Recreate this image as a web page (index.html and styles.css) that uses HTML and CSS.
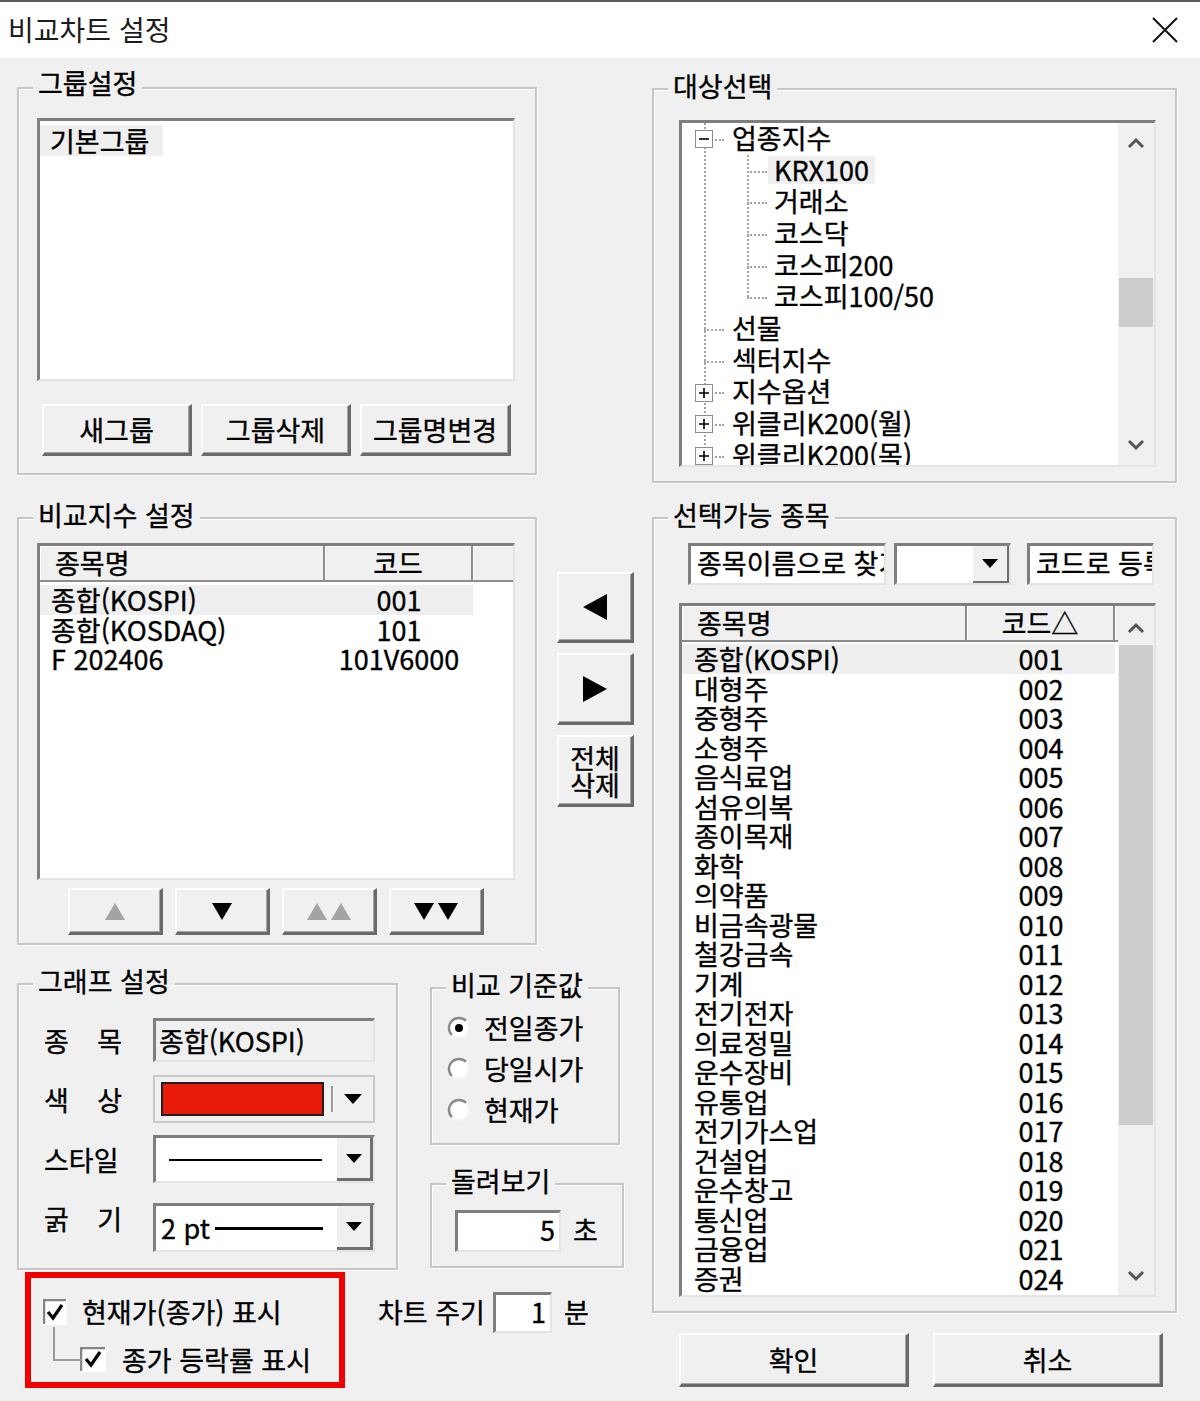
FILE: index.html
```html
<!DOCTYPE html>
<html lang="ko">
<head>
<meta charset="utf-8">
<title>비교차트 설정</title>
<link rel="stylesheet" href="styles.css">
</head>
<body>
<div class="dialog">
  <header class="titlebar">
    <span class="title">비교차트 설정</span>
    <svg class="close" viewBox="0 0 26 26"><path d="M1 1L25 25M25 1L1 25" stroke="#111" stroke-width="2" fill="none"/></svg>
  </header>
  <main class="content">
    <section class="leftcol">
      <div class="group g-groupset">
        <span class="legend legend-hi">그룹설정</span>
        <div class="listbox sunken">
          <div class="lb-item">기본그룹</div>
        </div>
        <div class="btnrow btnrow-group">
          <button class="btn bg-btn">새그룹</button>
          <button class="btn bg-btn">그룹삭제</button>
          <button class="btn bg-btn bg-wide">그룹명변경</button>
        </div>
      </div>

      <div class="row2">
        <div class="group g-compare">
          <span class="legend">비교지수 설정</span>
          <div class="listview lv-compare sunken">
            <div class="lv-main">
              <div class="lv-head">
                <div class="hcell hc-name">종목명</div>
                <div class="hcell hc-code">코드</div>
                <div class="hcell hc-rest"></div>
              </div>
              <div class="lv-rows">
                <div class="lv-row sel"><span class="c-name">종합(KOSPI)</span><span class="c-code">001</span></div>
                <div class="lv-row"><span class="c-name">종합(KOSDAQ)</span><span class="c-code">101</span></div>
                <div class="lv-row"><span class="c-name">F 202406</span><span class="c-code">101V6000</span></div>
              </div>
            </div>
          </div>
          <div class="btnrow btnrow-order">
            <button class="btn ob"><svg width="20" height="17" viewBox="0 0 20 17"><polygon points="10,0 20,17 0,17" fill="#a3a3a3"/></svg></button>
            <button class="btn ob"><svg width="20" height="17" viewBox="0 0 20 17"><polygon points="0,0 20,0 10,17" fill="#000"/></svg></button>
            <button class="btn ob"><svg width="44" height="17" viewBox="0 0 44 17"><polygon points="10,0 20,17 0,17" fill="#a3a3a3"/><polygon points="34,0 44,17 24,17" fill="#a3a3a3"/></svg></button>
            <button class="btn ob"><svg width="44" height="17" viewBox="0 0 44 17"><polygon points="0,0 20,0 10,17" fill="#000"/><polygon points="24,0 44,0 34,17" fill="#000"/></svg></button>
          </div>
        </div>
        <div class="midbtns">
          <button class="btn mb mb-1"><svg width="24" height="26" viewBox="0 0 24 26"><polygon points="24,0 24,26 0,13" fill="#000"/></svg></button>
          <button class="btn mb mb-2"><svg width="24" height="26" viewBox="0 0 24 26"><polygon points="0,0 0,26 24,13" fill="#000"/></svg></button>
          <button class="btn mb mb-2 mb-text">전체<br>삭제</button>
        </div>
      </div>

      <div class="row3">
        <div class="group g-graph">
          <span class="legend">그래프 설정</span>
          <div class="frow fr-1">
            <span class="flabel">종 목</span>
            <div class="field readonly sunken">종합(KOSPI)</div>
          </div>
          <div class="frow fr-2">
            <span class="flabel">색 상</span>
            <div class="field combo-color">
              <span class="swatch"></span>
              <span class="sep"></span>
              <span class="arrowbox"><svg width="18" height="10" viewBox="0 0 18 10"><polygon points="0,0 18,0 9,10" fill="#000"/></svg></span>
            </div>
          </div>
          <div class="frow fr-3">
            <span class="flabel">스타일</span>
            <div class="field combo sunken">
              <span class="combo-val"><span class="line thin"></span></span>
              <span class="ddbtn"><svg width="16" height="9" viewBox="0 0 16 9"><polygon points="0,0 16,0 8,9" fill="#000"/></svg></span>
            </div>
          </div>
          <div class="frow fr-4">
            <span class="flabel">굵 기</span>
            <div class="field combo sunken">
              <span class="combo-val"><span class="pt">2 pt</span><span class="line thick"></span></span>
              <span class="ddbtn"><svg width="16" height="9" viewBox="0 0 16 9"><polygon points="0,0 16,0 8,9" fill="#000"/></svg></span>
            </div>
          </div>
        </div>
        <div class="sidecol">
          <div class="group g-base">
            <span class="legend">비교 기준값</span>
            <label class="radio-row">
              <svg class="radio" width="24" height="24" viewBox="0 0 24 24"><circle cx="12" cy="12" r="10" fill="#fff"/><path d="M4.9 19.1A10 10 0 0 1 19.1 4.9" stroke="#8a8a8a" stroke-width="2.4" fill="none"/><path d="M19.1 4.9A10 10 0 0 1 4.9 19.1" stroke="#f4f4f4" stroke-width="2" fill="none"/><circle cx="12" cy="12" r="4" fill="#000"/></svg>
              <span>전일종가</span>
            </label>
            <label class="radio-row">
              <svg class="radio" width="24" height="24" viewBox="0 0 24 24"><circle cx="12" cy="12" r="10" fill="#fff"/><path d="M4.9 19.1A10 10 0 0 1 19.1 4.9" stroke="#8a8a8a" stroke-width="2.4" fill="none"/><path d="M19.1 4.9A10 10 0 0 1 4.9 19.1" stroke="#f4f4f4" stroke-width="2" fill="none"/></svg>
              <span>당일시가</span>
            </label>
            <label class="radio-row">
              <svg class="radio" width="24" height="24" viewBox="0 0 24 24"><circle cx="12" cy="12" r="10" fill="#fff"/><path d="M4.9 19.1A10 10 0 0 1 19.1 4.9" stroke="#8a8a8a" stroke-width="2.4" fill="none"/><path d="M19.1 4.9A10 10 0 0 1 4.9 19.1" stroke="#f4f4f4" stroke-width="2" fill="none"/></svg>
              <span>현재가</span>
            </label>
          </div>
          <div class="group g-rotate">
            <span class="legend">돌려보기</span>
            <div class="numedit sunken ne-rotate">5</div>
            <span class="unit">초</span>
          </div>
        </div>
      </div>

      <div class="row4">
        <div class="hilite">
          <div class="cb-row cb-1">
            <svg class="cb" width="24" height="26" viewBox="0 0 24 26"><rect x="0" y="0" width="24" height="26" fill="#fff"/><path d="M1 25V1H23" stroke="#858585" stroke-width="2.5" fill="none"/><path d="M5 13L10 19L19 6" stroke="#000" stroke-width="3.2" fill="none"/></svg>
            <span class="cb-text">현재가(종가) 표시</span>
          </div>
          <div class="cb-row cb-2">
            <svg class="cb" width="26" height="25" viewBox="0 0 26 25"><rect x="0" y="0" width="26" height="25" fill="#fff"/><path d="M1 24V1H25" stroke="#858585" stroke-width="2.5" fill="none"/><path d="M6 12L11 18L20 5" stroke="#000" stroke-width="3.2" fill="none"/></svg>
            <span class="cb-text">종가 등락률 표시</span>
          </div>
        </div>
        <div class="period">
          <span class="period-label">차트 주기</span>
          <div class="numedit sunken ne-period">1</div>
          <span class="unit">분</span>
        </div>
      </div>
    </section>

    <section class="rightcol">
      <div class="group g-target">
        <span class="legend">대상선택</span>
        <div class="tree sunken">
          <div class="tree-rows">
            <div class="node root"><span class="exp"><svg width="18" height="18" viewBox="0 0 18 18"><rect x="0.5" y="0.5" width="17" height="17" fill="#fff" stroke="#8c8c8c"/><path d="M4 9H14" stroke="#000" stroke-width="1.6"/></svg></span><span class="nlabel">업종지수</span></div>
            <div class="children">
              <div class="node child"><span class="nlabel sel">KRX100</span></div>
              <div class="node child"><span class="nlabel">거래소</span></div>
              <div class="node child"><span class="nlabel">코스닥</span></div>
              <div class="node child"><span class="nlabel">코스피200</span></div>
              <div class="node child"><span class="nlabel">코스피100/50</span></div>
            </div>
            <div class="node root"><span class="nlabel">선물</span></div>
            <div class="node root"><span class="nlabel">섹터지수</span></div>
            <div class="node root"><span class="exp"><svg width="18" height="18" viewBox="0 0 18 18"><rect x="0.5" y="0.5" width="17" height="17" fill="#fff" stroke="#8c8c8c"/><path d="M4 9H14M9 4V14" stroke="#000" stroke-width="1.6"/></svg></span><span class="nlabel">지수옵션</span></div>
            <div class="node root"><span class="exp"><svg width="18" height="18" viewBox="0 0 18 18"><rect x="0.5" y="0.5" width="17" height="17" fill="#fff" stroke="#8c8c8c"/><path d="M4 9H14M9 4V14" stroke="#000" stroke-width="1.6"/></svg></span><span class="nlabel">위클리K200(월)</span></div>
            <div class="node root"><span class="exp"><svg width="18" height="18" viewBox="0 0 18 18"><rect x="0.5" y="0.5" width="17" height="17" fill="#fff" stroke="#8c8c8c"/><path d="M4 9H14M9 4V14" stroke="#000" stroke-width="1.6"/></svg></span><span class="nlabel">위클리K200(목)</span></div>
          </div>
          <div class="vscroll vs-tree">
            <span class="sarrow"><svg width="18" height="12" viewBox="0 0 18 12"><path d="M2 10L9 3L16 10" stroke="#555" stroke-width="3" fill="none"/></svg></span>
            <div class="track"><div class="thumb" style="margin-top:115px;height:49px"></div></div>
            <span class="sarrow"><svg width="18" height="12" viewBox="0 0 18 12"><path d="M2 2L9 9L16 2" stroke="#555" stroke-width="3" fill="none"/></svg></span>
          </div>
        </div>
      </div>

      <div class="group g-avail">
        <span class="legend">선택가능 종목</span>
        <div class="searchrow">
          <div class="edit sunken ed-name">종목이름으로 찾기</div>
          <div class="edit sunken ed-combo">
            <span class="ddbtn"><svg width="16" height="9" viewBox="0 0 16 9"><polygon points="0,0 16,0 8,9" fill="#000"/></svg></span>
          </div>
          <div class="edit sunken ed-code">코드로 등록</div>
        </div>
        <div class="listview lv-avail sunken">
          <div class="lv-main">
            <div class="lv-head">
              <div class="hcell hc-name">종목명</div>
              <div class="hcell hc-code">코드△</div>
              <div class="hcell hc-rest"></div>
            </div>
            <div class="lv-rows">
              <div class="lv-row sel"><span class="c-name">종합(KOSPI)</span><span class="c-code">001</span></div>
              <div class="lv-row"><span class="c-name">대형주</span><span class="c-code">002</span></div>
              <div class="lv-row"><span class="c-name">중형주</span><span class="c-code">003</span></div>
              <div class="lv-row"><span class="c-name">소형주</span><span class="c-code">004</span></div>
              <div class="lv-row"><span class="c-name">음식료업</span><span class="c-code">005</span></div>
              <div class="lv-row"><span class="c-name">섬유의복</span><span class="c-code">006</span></div>
              <div class="lv-row"><span class="c-name">종이목재</span><span class="c-code">007</span></div>
              <div class="lv-row"><span class="c-name">화학</span><span class="c-code">008</span></div>
              <div class="lv-row"><span class="c-name">의약품</span><span class="c-code">009</span></div>
              <div class="lv-row"><span class="c-name">비금속광물</span><span class="c-code">010</span></div>
              <div class="lv-row"><span class="c-name">철강금속</span><span class="c-code">011</span></div>
              <div class="lv-row"><span class="c-name">기계</span><span class="c-code">012</span></div>
              <div class="lv-row"><span class="c-name">전기전자</span><span class="c-code">013</span></div>
              <div class="lv-row"><span class="c-name">의료정밀</span><span class="c-code">014</span></div>
              <div class="lv-row"><span class="c-name">운수장비</span><span class="c-code">015</span></div>
              <div class="lv-row"><span class="c-name">유통업</span><span class="c-code">016</span></div>
              <div class="lv-row"><span class="c-name">전기가스업</span><span class="c-code">017</span></div>
              <div class="lv-row"><span class="c-name">건설업</span><span class="c-code">018</span></div>
              <div class="lv-row"><span class="c-name">운수창고</span><span class="c-code">019</span></div>
              <div class="lv-row"><span class="c-name">통신업</span><span class="c-code">020</span></div>
              <div class="lv-row"><span class="c-name">금융업</span><span class="c-code">021</span></div>
              <div class="lv-row"><span class="c-name">증권</span><span class="c-code">024</span></div>
            </div>
          </div>
          <div class="vscroll vs-list">
            <span class="sarrow"><svg width="18" height="12" viewBox="0 0 18 12"><path d="M2 10L9 3L16 10" stroke="#555" stroke-width="3" fill="none"/></svg></span>
            <div class="track"><div class="thumb" style="margin-top:0;height:480px"></div></div>
            <span class="sarrow"><svg width="18" height="12" viewBox="0 0 18 12"><path d="M2 2L9 9L16 2" stroke="#555" stroke-width="3" fill="none"/></svg></span>
          </div>
        </div>
      </div>

      <div class="okrow">
        <button class="btn okbtn">확인</button>
        <button class="btn okbtn">취소</button>
      </div>
    </section>
  </main>
</div>
</body>
</html>
```

FILE: styles.css
```css
* { box-sizing: border-box; }
html, body { margin: 0; padding: 0; }
body {
  width: 1200px;
  height: 1401px;
  overflow: hidden;
  background: #f0f0f0;
  color: #000;
  font-family: "Noto Sans CJK KR", "Noto Sans", sans-serif;
  font-size: 27px;
  -webkit-text-stroke: 0.35px #000;
}
button { font: inherit; color: #000; padding: 0; margin: 0; }

.dialog { width: 1200px; height: 1401px; }

.titlebar {
  height: 58px;
  background: #fff;
  border-top: 2px solid #5c5c5c;
  display: flex;
  align-items: center;
  justify-content: space-between;
  padding: 0 22px 0 8px;
}
.title { font-size: 28px; line-height: 30px; color: #1c1c1c; margin-top: -3px; -webkit-text-stroke: 0; }
.close { width: 26px; height: 26px; }

.content { display: flex; height: 1343px; padding-left: 17px; }
.leftcol { width: 623px; display: flex; flex-direction: column; }
.rightcol { width: 525px; margin-left: 12px; display: flex; flex-direction: column; }

/* etched group box */
.group {
  position: relative;
  border: 2px solid #c6c6c6;
  box-shadow: inset 1px 1px 0 #fff, 1px 1px 0 #fff;
}
.legend {
  position: absolute;
  left: 14px;
  top: -19px;
  padding: 0 5px;
  line-height: 30px;
  background: #f0f0f0;
  white-space: nowrap;
}
.legend-hi { top: -21px; }

/* 3D styles */
.sunken {
  background: #fff;
  border-style: solid;
  border-width: 3px 2px 2px 3px;
  border-color: #7e7e7e #e4e4e4 #e4e4e4 #7e7e7e;
}
.btn {
  background: #f0f0f0;
  border-style: solid;
  border-width: 2px 3px 3px 2px;
  border-color: #fdfdfd #6a6a6a #6a6a6a #fdfdfd;
  box-shadow: inset -1px -1px 0 #a5a5a5;
  display: flex;
  align-items: center;
  justify-content: center;
  line-height: 30px;
}

/* 그룹설정 */
.g-groupset { width: 520px; height: 388px; margin-top: 29px; }
.listbox { margin: 29px 0 0 18px; width: 478px; height: 263px; }
.lb-item {
  display: inline-block;
  padding: 0 14px 0 10px;
  line-height: 31px;
  background: #efefef;
}
.btnrow { display: flex; }
.btnrow-group { margin: 23px 0 0 23px; gap: 9px; }
.bg-btn { width: 150px; height: 52px; }
.bg-wide { width: 151px; }

/* 비교지수 설정 */
.row2 { display: flex; margin-top: 42px; }
.g-compare { width: 520px; height: 428px; }
.listview { display: flex; overflow: hidden; }
.lv-compare { margin: 24px 0 0 18px; width: 478px; height: 337px; }
.lv-main { flex: 1; min-width: 0; display: flex; flex-direction: column; }
.lv-head {
  display: flex;
  height: 36px;
  flex-shrink: 0;
  background: #f0f0f0;
  border-bottom: 2px solid #8c8c8c;
}
.hcell { height: 34px; line-height: 34px; box-shadow: inset 1px 1px 0 #fff; white-space: nowrap; }
.hc-name { width: 285px; padding-left: 15px; border-right: 2px solid #8c8c8c; }
.hc-code { width: 148px; text-align: center; border-right: 2px solid #8c8c8c; }
.hc-rest { flex: 1; }
.lv-rows { padding-top: 3px; }
.lv-avail .lv-rows { padding-top: 2px; }
.lv-row { display: flex; width: 433px; height: 29.5px; line-height: 29.5px; white-space: nowrap; }
.lv-row.sel { background: #efefef; }
.c-name { width: 285px; padding-left: 11px; }
.lv-avail .c-name { padding-left: 12px; }
.c-code { width: 148px; text-align: center; }

.btnrow-order { margin: 8px 0 0 49px; gap: 12px; }
.ob { width: 95px; height: 47px; }

.midbtns { margin-left: 20px; padding-top: 55px; display: flex; flex-direction: column; gap: 10px; }
.mb { width: 77px; }
.mb-1 { height: 71px; }
.mb-2 { height: 72px; }
.mb-text { line-height: 27px; text-align: center; }

/* 그래프 설정 */
.row3 { display: flex; margin-top: 38px; }
.g-graph { width: 381px; height: 287px; padding: 33px 0 0 25px; }
.frow { display: flex; align-items: center; }
.fr-1 { height: 44px; }
.fr-2 { height: 48px; margin-top: 13px; }
.fr-3 { height: 48px; margin-top: 12px; }
.fr-4 { height: 49px; margin-top: 20px; }
.flabel { width: 78px; text-align: justify; text-align-last: justify; white-space: nowrap; }
.fr-4 .flabel { margin-top: -18px; }
.field { margin-left: 31px; width: 222px; height: 100%; display: flex; align-items: center; }
.readonly { background: #f0f0f0; padding-left: 3px; line-height: 30px; }
.combo-color {
  background: #f0f0f0;
  border: 2px solid #c8c8c8;
  padding-left: 6px;
}
.swatch { width: 163px; height: 34px; background: #e81a0a; border: 2px solid #1e1e1e; }
.sep { width: 2px; height: 26px; background: #9a9a9a; margin-left: 7px; box-shadow: 1px 0 0 #fff; }
.arrowbox { flex: 1; display: flex; justify-content: center; }
.combo { justify-content: space-between; }
.combo-val { flex: 1; display: flex; align-items: center; height: 100%; }
.line { display: block; background: #000; }
.line.thin { width: 153px; height: 2px; margin-left: 13px; }
.pt { padding-left: 5px; line-height: 30px; }
.line.thick { width: 108px; height: 3px; margin-left: 5px; }
.ddbtn {
  width: 36px;
  height: 100%;
  background: #f0f0f0;
  border-right: 3px solid #6f6f6f;
  border-bottom: 3px solid #6f6f6f;
  display: flex;
  align-items: center;
  justify-content: center;
  flex-shrink: 0;
}

.sidecol { margin-left: 32px; display: flex; flex-direction: column; }
.g-base { width: 190px; height: 158px; margin-top: 4px; padding: 18px 0 0 15px; }
.radio-row { display: flex; align-items: center; height: 41px; }
.radio { flex-shrink: 0; }
.radio-row span { margin-left: 13px; line-height: 30px; }
.g-rotate { width: 194px; height: 85px; margin-top: 38px; padding: 25px 0 0 23px; display: flex; align-items: flex-start; }
.numedit { text-align: right; line-height: 34px; padding-right: 4px; }
.ne-rotate { width: 106px; height: 42px; }
.unit { margin-left: 12px; line-height: 40px; }

/* 강조 상자 */
.row4 { display: flex; margin-top: 2px; }
.hilite {
  margin-left: 8px;
  width: 320px;
  height: 116px;
  border: 6px solid #f20000;
  padding: 21px 0 0 12px;
}
.cb-row { display: flex; align-items: center; }
.cb-1 { height: 26px; }
.cb-1 .cb-text { margin-left: 15px; }
.cb-2 { position: relative; height: 25px; margin: 22px 0 0 37px; }
.cb-2::before {
  content: "";
  position: absolute;
  left: -27px;
  top: -20px;
  width: 27px;
  height: 32px;
  border-left: 2px solid #9a9a9a;
  border-bottom: 2px solid #9a9a9a;
}
.cb-2 .cb-text { margin-left: 16px; }
.cb-text { line-height: 30px; white-space: nowrap; }

.period { margin-left: 33px; padding-top: 20px; display: flex; align-items: flex-start; }
.period-label { line-height: 40px; white-space: nowrap; }
.ne-period { margin-left: 8px; width: 59px; height: 41px; }

/* 대상선택 */
.g-target { width: 525px; height: 395px; margin-top: 30px; }
.tree { margin: 30px 0 0 25px; width: 477px; height: 347px; display: flex; overflow: hidden; }
.tree-rows { flex: 1; position: relative; overflow: hidden; }
.tree-rows::before {
  content: "";
  position: absolute;
  left: 22px;
  top: 0;
  bottom: 0;
  border-left: 2px dotted #a3a3a3;
}
.children { position: relative; }
.children::before {
  content: "";
  position: absolute;
  left: 65px;
  top: 0;
  bottom: 15.85px;
  border-left: 2px dotted #a3a3a3;
}
.node { position: relative; height: 31.7px; display: flex; align-items: center; white-space: nowrap; }
.node.root { padding-left: 44px; }
.node.child { padding-left: 86px; }
.node::after {
  content: "";
  position: absolute;
  top: 50%;
  width: 20px;
  border-top: 2px dotted #a3a3a3;
}
.node.root::after { left: 22px; }
.node.child::after { left: 65px; }
.exp { position: absolute; left: 13px; top: 7px; width: 18px; height: 18px; z-index: 1; display: block; }
.exp svg { display: block; }
.nlabel { padding: 0 6px; line-height: 28px; margin-top: -2px; }
.nlabel.sel { background: #efefef; }

.vscroll { width: 36px; flex-shrink: 0; background: #f0f0f0; display: flex; flex-direction: column; }
.sarrow { height: 40px; display: flex; align-items: center; justify-content: center; flex-shrink: 0; }
.track { flex: 1; padding: 0 1px; }
.thumb { background: #cdcdcd; }
.vs-list .sarrow { height: 39px; }
.vs-list .sarrow:first-child { align-items: center; padding-top: 4px; }

/* 선택가능 종목 */
.g-avail { width: 525px; height: 796px; margin-top: 34px; }
.searchrow { display: flex; margin: 24px 0 0 34px; height: 42px; }
.edit { overflow: hidden; white-space: nowrap; line-height: 34px; padding-left: 6px; }
.ed-name { width: 198px; }
.ed-combo { width: 117px; margin-left: 8px; padding-left: 0; display: flex; justify-content: flex-end; }
.ed-combo .ddbtn { border-right-width: 2px; border-bottom-width: 2px; }
.ed-code { width: 127px; margin-left: 16px; }
.lv-avail { margin: 18px 0 0 25px; width: 477px; height: 694px; }

.okrow { display: flex; margin: 20px 0 0 27px; gap: 24px; }
.okbtn { width: 230px; height: 54px; }
```
